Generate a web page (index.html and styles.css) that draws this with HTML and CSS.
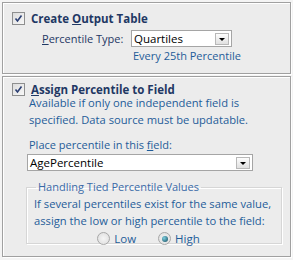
FILE: index.html
```html
<!DOCTYPE html>
<html lang="en">
<head>
  <meta charset="UTF-8" />
  <title>Percentile Options</title>
  <link rel="stylesheet" href="styles.css">
</head>
<body>

<div class="panel top-panel">
  <label class="check-row">
    <span class="check">
      <svg width="11" height="11" viewBox="0 0 11 11"><path d="M2.5 5.5 L4.5 8 L8.5 2.5" fill="none" stroke="#2b3f73" stroke-width="1.6"/></svg>
    </span>
    <span class="heading">Create <u>O</u>utput Table</span>
  </label>
  <div class="type-row">
    <span class="label"><u>P</u>ercentile Type:</span>
    <div class="select type-select">
      <span class="value">Quartiles</span>
      <span class="arrow"><i></i></span>
    </div>
  </div>
  <div class="hint">Every 25th Percentile</div>
</div>

<div class="panel bottom-panel">
  <label class="check-row">
    <span class="check">
      <svg width="11" height="11" viewBox="0 0 11 11"><path d="M2.5 5.5 L4.5 8 L8.5 2.5" fill="none" stroke="#2b3f73" stroke-width="1.6"/></svg>
    </span>
    <span class="heading"><u>A</u>ssign Percentile to Field</span>
  </label>
  <div class="indent">
    <p class="desc">Available if only one independent field is specified. Data source must be updatable.</p>
    <div class="field-label">Place percentile in this <u>f</u>ield:</div>
    <div class="select field-select">
      <span class="value">AgePercentile</span>
      <span class="arrow"><i></i></span>
    </div>
    <fieldset class="group">
      <legend>Handling Tied Percentile Values</legend>
      <p class="desc">If several percentiles exist for the same value, assign the low or high percentile to the field:</p>
      <div class="radios">
        <span class="radio"><span class="dot"></span>Low</span>
        <span class="radio on"><span class="dot"></span>High</span>
      </div>
    </fieldset>
  </div>
</div>

</body>
</html>
```

FILE: styles.css
```css
body {
  margin: 0;
  padding: 2px 2px 0 2px;
  width: 289px;
  height: 258px;
  background: #f4f4f4;
  font-family: "Open Sans", "Noto Sans", sans-serif;
  font-size: 11px;
  color: #1f5c99;
  overflow: hidden;
}
.panel {
  background: #ececec;
  border: 1px solid #a0a0a0;
  box-shadow: inset 1px 1px 0 #fff, 1px 1px 0 #fff;
  box-sizing: border-box;
}
.top-panel {
  height: 72px;
  padding: 7px 0 0 9px;
}
.bottom-panel {
  margin-top: 2px;
  height: 181px;
  padding: 4px 0 0 9px;
}
.check-row {
  display: flex;
  align-items: center;
  gap: 6px;
  height: 16px;
}
.check {
  width: 11px;
  height: 11px;
  border: 1px solid #8e8f8f;
  background: linear-gradient(135deg, #dcdcdc, #f8f8f8);
  display: flex;
}
.heading {
  font-weight: bold;
  font-size: 11.5px;
  color: #1f3864;
}
.type-row {
  display: flex;
  align-items: center;
  margin: 4px 0 0 30px;
  height: 17px;
}
.label {
  color: #1f3864;
  width: 89px;
}
.select {
  display: flex;
  align-items: center;
  justify-content: space-between;
  background: #fff;
  border: 1px solid #a5a5a5;
  box-sizing: border-box;
  height: 17px;
  color: #000;
  padding-left: 2px;
}
.type-select {
  width: 101px;
}
.value {
  font-size: 11.5px;
  line-height: 15px;
}
.arrow {
  width: 14px;
  height: 12px;
  margin-right: 2px;
  border: 1px solid #b8b8b8;
  box-sizing: border-box;
  background: linear-gradient(#fdfdfd, #e0e0e0);
  display: flex;
  align-items: center;
  justify-content: center;
}
.arrow i {
  width: 0;
  height: 0;
  border-left: 3px solid transparent;
  border-right: 3px solid transparent;
  border-top: 3px solid #000;
  margin-top: 1px;
}
.hint {
  margin: 1px 0 0 121px;
}
.indent {
  padding-left: 17px;
}
.desc {
  margin: -3px 0 0 0;
  line-height: 17px;
  font-size: 11.2px;
}
.field-label {
  margin-top: 9px;
  line-height: 16px;
  margin-bottom: 1px;
}
.field-select {
  margin-left: -2px;
  width: 226px;
}
.group {
  margin: 10px 0 0 -3px;
  width: 256px;
  height: 63px;
  box-sizing: border-box;
  border: 1px solid #d6d6d6;
  box-shadow: inset 1px 1px 0 #fff, 1px 1px 0 #fff;
  padding: 0 0 0 7px;
}
.group legend {
  padding: 0 2px;
  margin-left: 2px;
  color: #3a6aa8;
  line-height: 12px;
}
.group .desc {
  margin-top: 3px;
  line-height: 16.5px;
}
.radios {
  display: flex;
  justify-content: center;
  gap: 22px;
  margin-top: 2px;
  padding-right: 18px;
  font-size: 11.5px;
}
.radio {
  display: flex;
  align-items: center;
  gap: 4px;
}
.dot {
  width: 11px;
  height: 11px;
  border-radius: 50%;
  border: 1px solid #a7a7a7;
  background: radial-gradient(circle, #f5f5f5, #dcdcdc);
  display: flex;
  align-items: center;
  justify-content: center;
}
.radio.on .dot::after {
  content: "";
  width: 6px;
  height: 6px;
  border-radius: 50%;
  background: radial-gradient(circle at 35% 35%, #7fd0e0, #12485c);
}
```
